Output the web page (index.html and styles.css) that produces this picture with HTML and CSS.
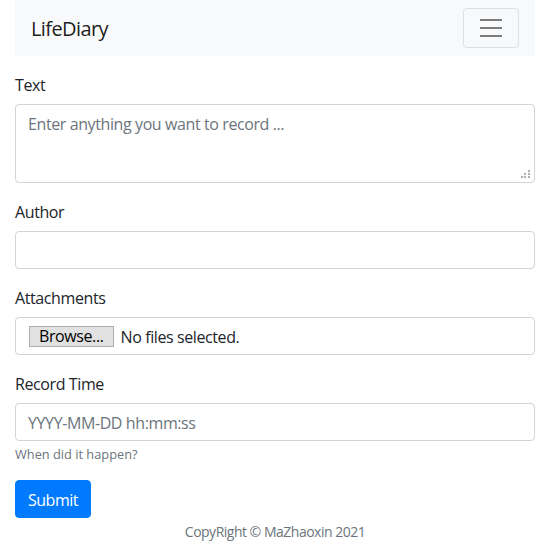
FILE: index.html
```html
<!DOCTYPE html>
<html lang="en">
<head>
<meta charset="utf-8">
<title>LifeDiary</title>
<link rel="stylesheet" href="styles.css">
</head>
<body>
<div class="container">
  <nav class="navbar">
    <span class="brand">LifeDiary</span>
    <button class="toggler" type="button" aria-label="Toggle navigation">
      <svg width="30" height="30" viewBox="0 0 30 30"><path d="M4 7h22M4 15h22M4 23h22" stroke="rgba(0,0,0,0.5)" stroke-width="2" stroke-linecap="butt"/></svg>
    </button>
  </nav>
  <form class="form">
    <div class="group">
      <label class="label">Text</label>
      <div class="ta-wrap">
        <textarea class="control textarea" placeholder="Enter anything you want to record ..."></textarea>
        <span class="grip"><i></i><i></i><i></i><i></i><i></i><i></i></span>
      </div>
    </div>
    <div class="group">
      <label class="label">Author</label>
      <input class="control" type="text">
    </div>
    <div class="group">
      <label class="label">Attachments</label>
      <div class="control file">
        <span class="browse">Browse...</span>
        <span class="nofile">No files selected.</span>
      </div>
    </div>
    <div class="group">
      <label class="label">Record Time</label>
      <input class="control" type="text" placeholder="YYYY-MM-DD hh:mm:ss">
      <small class="help">When did it happen?</small>
    </div>
    <button class="submit" type="button">Submit</button>
  </form>
  <footer class="footer">CopyRight © MaZhaoxin 2021</footer>
</div>
</body>
</html>
```
FILE: styles.css
```css
* { box-sizing: border-box; }
html, body { margin: 0; padding: 0; }
body {
  font-family: "Open Sans", "Noto Sans", "Liberation Sans", sans-serif;
  font-size: 16px;
  line-height: 1.5;
  color: #212529;
  background: #fff;
}
.container { padding: 0 15px; }
.navbar {
  background: #f8f9fa;
  height: 56px;
  padding: 8px 16px;
  display: flex;
  align-items: center;
  justify-content: space-between;
}
.brand { font-size: 20px; line-height: 30px; padding-top: 2px; color: rgba(0,0,0,0.9); letter-spacing: -0.6px; }
.toggler {
  width: 56px; height: 40px;
  padding: 4px 12px;
  background: transparent;
  border: 1px solid rgba(0,0,0,0.1);
  border-radius: 4px;
  display: flex; align-items: center; justify-content: center;
}
.toggler svg { display: block; }
.form { margin-top: 16px; }
.group { margin-bottom: 16px; }
.label { display: block; margin-bottom: 7px; padding-top: 1px; line-height: 24px; letter-spacing: -0.4px; }
.control {
  display: block;
  width: 100%;
  height: 38px;
  padding: 7px 12px 5px;
  font: inherit;
  letter-spacing: -0.4px;
  color: #495057;
  background: #fff;
  border: 1px solid #ced4da;
  border-radius: 4px;
  margin: 0;
}
.control::placeholder { color: #6c757d; opacity: 1; }
.ta-wrap { position: relative; }
.textarea { height: 79px; resize: none; vertical-align: top; }
.grip {
  position: absolute; right: 5px; bottom: 4px;
  width: 9px; height: 9px;
}
.grip i { position: absolute; width: 2px; height: 2px; background: #b0b0b0; }
.grip i:nth-child(1) { right: 0; top: 0; }
.grip i:nth-child(2) { right: 0; top: 3px; }
.grip i:nth-child(3) { right: 4px; top: 3px; }
.grip i:nth-child(4) { right: 0; top: 6px; }
.grip i:nth-child(5) { right: 4px; top: 6px; }
.grip i:nth-child(6) { right: 7px; top: 6px; }
.file { display: flex; align-items: center; gap: 7px; padding: 1px 13px 0; color: #212529; }
.browse {
  background: #e1e1e1;
  border: 1px solid #adadad;
  height: 21px;
  line-height: 19px;
  padding: 0 9px;
  color: #000;
}
.nofile { color: #212529; }
.help { display: block; margin-top: 3px; padding-top: 1px; font-size: 12.8px; line-height: 19px; color: #6c757d; letter-spacing: 0; }
.submit {
  display: block;
  height: 38px;
  padding: 7px 12px 5px;
  font: inherit;
  letter-spacing: -0.5px;
  color: #fff;
  background: #007bff;
  border: 1px solid #007bff;
  border-radius: 4px;
}
.footer { text-align: center; font-size: 14px; line-height: 24px; color: #6c757d; padding-top: 2px; letter-spacing: -0.5px; }
```
